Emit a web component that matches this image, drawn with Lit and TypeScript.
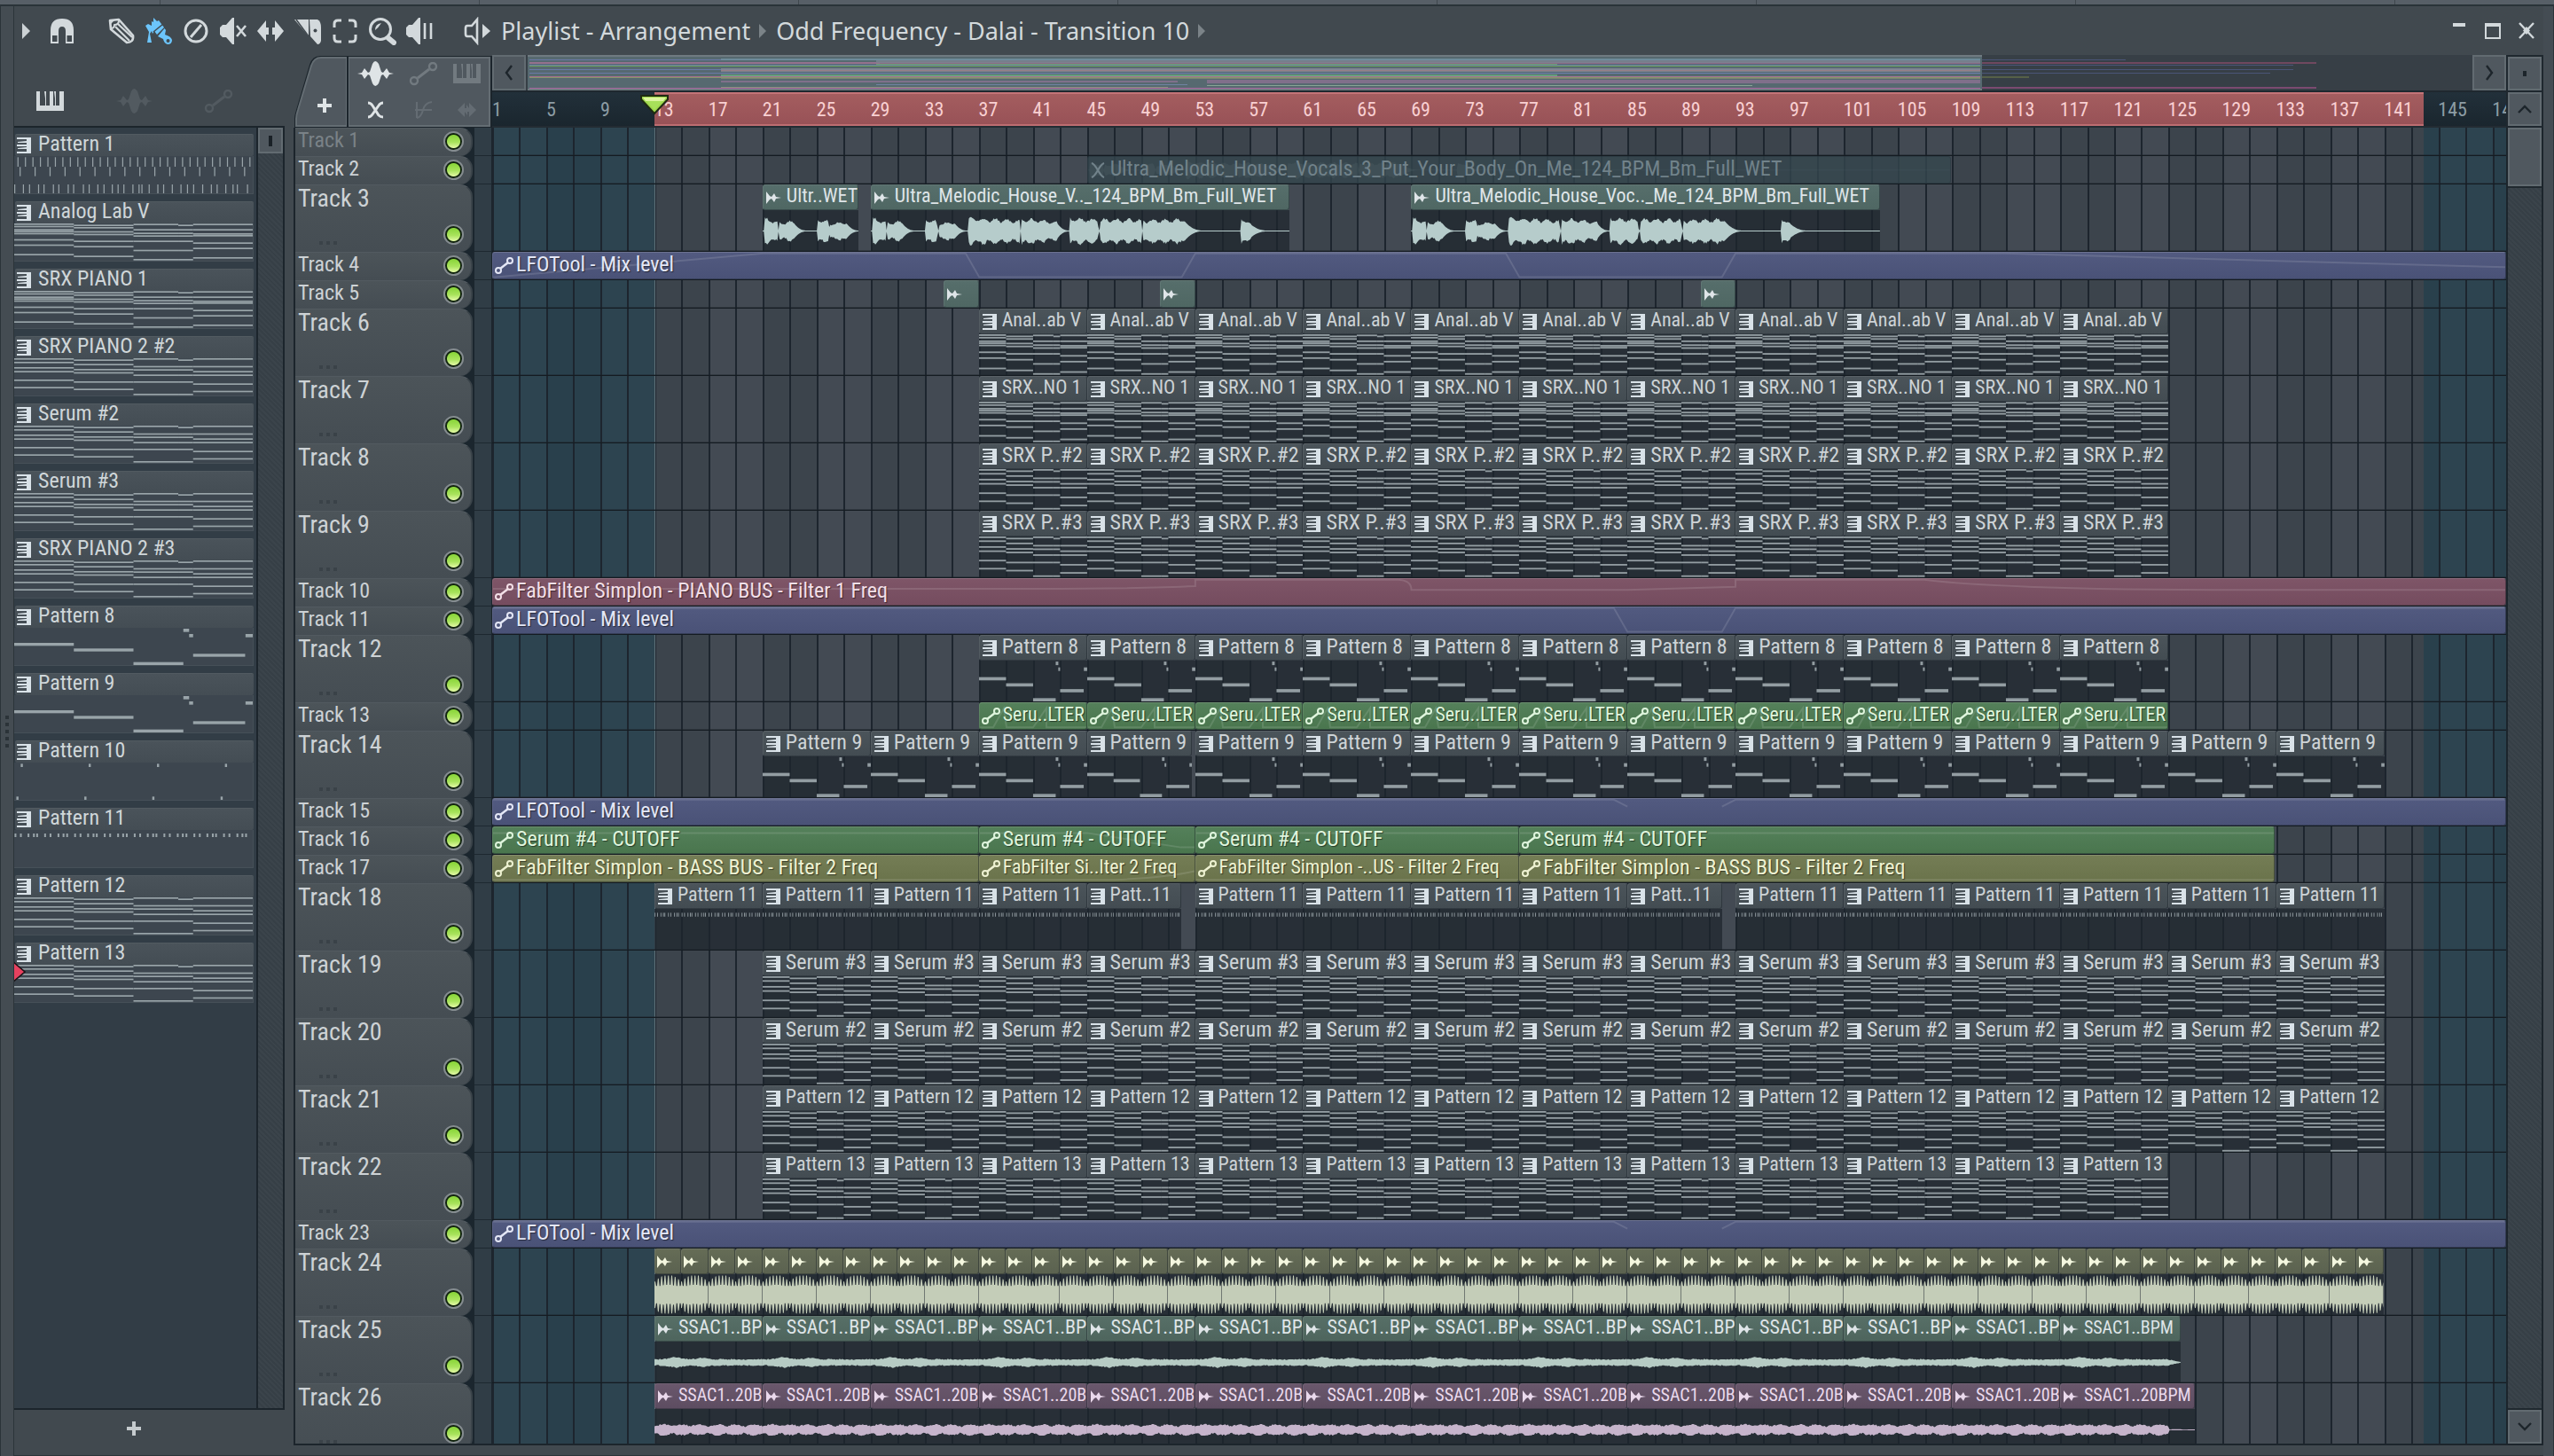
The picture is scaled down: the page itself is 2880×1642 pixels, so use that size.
import { LitElement, html, svg, css, nothing, TemplateResult, SVGTemplateResult } from "lit";
import { customElement, property } from "lit/decorators.js";

/* ---------- timeline model ---------- */

const BARS = 149;
const LOOP_START = 13;
const LOOP_END = 143.9;
const pct = (bars: number) => `${(bars / BARS) * 100}%`;

type Kind = "pattern" | "audio" | "auto";
type Fit = "" | "tight" | "tighter";
interface Clip {
  start: number;
  end: number;
  label: string;
  kind: Kind;
  tone: string;
  art?: string;
  muted?: boolean;
  fit?: Fit;
}
interface Track {
  name: string;
  tall?: boolean;
  off?: boolean;
  clips: Clip[];
}

const run = (
  from: number,
  count: number,
  step: number,
  base: Omit<Clip, "start" | "end">,
  special: Record<number, Partial<Clip>> = {},
): Clip[] =>
  Array.from({ length: count }, (_, i) => {
    const start = from + i * step;
    return { ...base, start, end: start + step, ...(special[start] ?? {}) };
  });

const pattern = (label: string, art: string, fit: Fit = "") => ({ label, art, fit, kind: "pattern" as Kind, tone: "slate" });
const auto = (start: number, end: number, label: string, tone: string, art?: string, fit: Fit = ""): Clip => ({
  start, end, label, tone, art, fit, kind: "auto",
});
const audio = (start: number, end: number, label: string, tone: string, art: string): Clip => ({
  start, end, label, tone, art, fit: "tight", kind: "audio",
});

const END = BARS + 1;
const TRACKS: Track[] = [
  { name: "Track 1", off: true, clips: [] },
  {
    name: "Track 2",
    clips: [{ start: 45, end: 108.9, label: "Ultra_Melodic_House_Vocals_3_Put_Your_Body_On_Me_124_BPM_Bm_Full_WET", kind: "audio", tone: "faded", art: "vocal", muted: true }],
  },
  {
    name: "Track 3",
    tall: true,
    clips: [
      audio(21, 28.1, "Ultr..WET", "teal", "vocal"),
      audio(29, 60, "Ultra_Melodic_House_V.._124_BPM_Bm_Full_WET", "teal", "vocal"),
      audio(69, 103.7, "Ultra_Melodic_House_Voc.._Me_124_BPM_Bm_Full_WET", "teal", "vocal"),
    ],
  },
  { name: "Track 4", clips: [auto(1, END, "LFOTool - Mix level", "blue", "mixA")] },
  {
    name: "Track 5",
    clips: [audio(34.4, 37, "", "teal", "tail"), audio(50.4, 53, "", "teal", "tail"), audio(90.4, 93, "", "teal", "tail")],
  },
  { name: "Track 6", tall: true, clips: run(37, 11, 8, pattern("Anal..ab V", "chordsA", "tight")) },
  { name: "Track 7", tall: true, clips: run(37, 11, 8, pattern("SRX..NO 1", "chordsA", "tight")) },
  { name: "Track 8", tall: true, clips: run(37, 11, 8, pattern("SRX P..#2", "chordsB")) },
  { name: "Track 9", tall: true, clips: run(37, 11, 8, pattern("SRX P..#3", "chordsB")) },
  { name: "Track 10", clips: [auto(1, END, "FabFilter Simplon - PIANO BUS - Filter 1 Freq", "rose", "freq")] },
  { name: "Track 11", clips: [auto(1, END, "LFOTool - Mix level", "blue", "mixB")] },
  { name: "Track 12", tall: true, clips: run(37, 11, 8, pattern("Pattern 8", "bass")) },
  { name: "Track 13", clips: run(37, 11, 8, { label: "Seru..LTER", kind: "auto", tone: "green", art: "ramp", fit: "tight" }) },
  { name: "Track 14", tall: true, clips: run(21, 15, 8, pattern("Pattern 9", "bass"), { 45: { end: 52.8 } }) },
  { name: "Track 15", clips: [auto(1, END, "LFOTool - Mix level", "blue", "mixC")] },
  {
    name: "Track 16",
    clips: [
      auto(1, 37, "Serum #4 - CUTOFF", "green", "flat"),
      auto(37, 53, "Serum #4 - CUTOFF", "green", "fall"),
      auto(53, 77, "Serum #4 - CUTOFF", "green", "flat"),
      auto(77, 132.9, "Serum #4 - CUTOFF", "green", "flat"),
    ],
  },
  {
    name: "Track 17",
    clips: [
      auto(1, 37, "FabFilter Simplon - BASS BUS - Filter 2 Freq", "olive", "low"),
      auto(37, 53, "FabFilter Si..lter 2 Freq", "olive", "rise", "tight"),
      auto(53, 77, "FabFilter Simplon -..US - Filter 2 Freq", "olive", "low", "tight"),
      auto(77, 132.9, "FabFilter Simplon - BASS BUS - Filter 2 Freq", "olive", "low"),
    ],
  },
  {
    name: "Track 18",
    tall: true,
    clips: run(13, 16, 8, pattern("Pattern 11", "ticks", "tight"), {
      45: { end: 52, label: "Patt..11" },
      85: { end: 92, label: "Patt..11" },
    }),
  },
  { name: "Track 19", tall: true, clips: run(21, 15, 8, pattern("Serum #3", "chordsB")) },
  { name: "Track 20", tall: true, clips: run(21, 15, 8, pattern("Serum #2", "chordsB")) },
  { name: "Track 21", tall: true, clips: run(21, 15, 8, pattern("Pattern 12", "chordsB", "tight")) },
  { name: "Track 22", tall: true, clips: run(21, 13, 8, pattern("Pattern 13", "chordsB", "tight")) },
  { name: "Track 23", clips: [auto(1, END, "LFOTool - Mix level", "blue", "mixC")] },
  { name: "Track 24", tall: true, clips: run(13, 64, 2, { label: "", kind: "audio", tone: "sand", art: "kick" }) },
  {
    name: "Track 25",
    tall: true,
    clips: run(13, 14, 8, { label: "SSAC1..BP", kind: "audio", tone: "mint", art: "hat", fit: "tight" }, { 117: { end: 125.95, label: "SSAC1..BPM", fit: "tighter" } }),
  },
  {
    name: "Track 26",
    tall: true,
    clips: run(13, 14, 8, { label: "SSAC1..20B", kind: "audio", tone: "plum", art: "shaker", fit: "tighter" }, { 117: { end: 127, label: "SSAC1..20BPM" } }),
  },
];

const PICKER: [string, string][] = [
  ["Pattern 1", "drums"],
  ["Analog Lab V", "chordsA"],
  ["SRX PIANO 1", "chordsA"],
  ["SRX PIANO 2 #2", "chordsB"],
  ["Serum #2", "chordsB"],
  ["Serum #3", "chordsB"],
  ["SRX PIANO 2 #3", "chordsB"],
  ["Pattern 8", "bass"],
  ["Pattern 9", "bass"],
  ["Pattern 10", "dots"],
  ["Pattern 11", "ticks"],
  ["Pattern 12", "chordsB"],
  ["Pattern 13", "chordsB"],
];

/* ---------- note miniatures, on a 660 x 126 canvas ---------- */

const SEGS = [[0, 165], [165, 330], [330, 454], [454, 495], [495, 660]];
const chords = (rows: number[][]) =>
  rows.flatMap((ys, i) => ys.map((y) => [SEGS[i][0], y - 3, SEGS[i][1] - SEGS[i][0], 5]));

const NOTES: Record<string, number[][]> = {
  chordsA: chords([
    [3, 11, 22, 28, 35, 56, 74, 106],
    [7, 15, 29, 38, 61, 79, 112],
    [4, 22, 34, 43, 61, 92, 123],
    [7, 22, 34, 43, 61, 92, 123],
    [4, 22, 36, 42, 67, 85, 117],
  ]),
  chordsB: chords([
    [3, 15, 33, 46, 75, 100],
    [7, 22, 39, 50, 81, 106],
    [3, 29, 40, 58, 81, 123],
    [7, 29, 40, 58, 81, 123],
    [3, 29, 46, 58, 88, 113],
  ]),
  bass: [
    [0, 51, 165, 10], [165, 70, 165, 10], [330, 116, 138, 10], [495, 88, 144, 10],
    [468, 3, 16, 11], [484, 21, 11, 11], [640, 21, 20, 11],
  ],
  dots: [
    ...[18, 206, 395, 583].map((x) => [x, 4, 6, 11]),
    ...[6, 194, 382, 571].map((x) => [x, 115, 6, 11]),
  ],
  ticks: [0, 1, 2, 3].flatMap((k) =>
    [1, 16, 37, 52, 61, 83, 98, 120, 134, 144].map((x) => [x + k * 165, 12, 5, 12])),
  drums: [
    ...Array.from({ length: 32 }, (_, i) => [9 + i * 20.7, 4, 3, 32]),
    ...Array.from({ length: 16 }, (_, i) => [15 + i * 41.4, 37, 3, 31]),
    ...[0, 24, 41, 66, 81, 107, 122, 148, 163, 190, 206, 230, 247, 270, 286, 302, 327, 344, 352, 372, 396, 412, 436, 460, 478, 495, 520, 544, 560, 584, 604, 616, 644].map((x) => [x, 96, 3, 30]),
  ],
};

const notes = (kind: string) => html`
  <svg class="art" viewBox="0 0 660 126" preserveAspectRatio="none" aria-hidden="true">
    ${NOTES[kind].map(([x, y, w, h]) => svg`<rect x=${x} y=${Math.max(0, y)} width=${w} height=${h} />`)}
  </svg>`;

/* ---------- waveforms ---------- */

const noise = (n: number) => {
  const s = Math.sin(n * 127.1 + 11.7) * 43758.5453;
  return s - Math.floor(s);
};

/* [start, end of sustain, end of decay, peak, level at the end of the sustain] */
const BURSTS: number[][] = [
  [0.1, 1.1, 1.2, 37, 24], [1.2, 2.3, 3.3, 24, 27], [4.05, 4.9, 5, 33, 27], [5, 6.2, 7.15, 22, 26],
  [7.2, 11, 11.05, 36, 30], [11.1, 13.8, 14.7, 37, 25], [14.75, 16.8, 16.9, 36, 32], [16.95, 20, 20.1, 33, 32],
  [20.15, 23.2, 24.6, 30, 34], [27.4, 28.1, 29.4, 38, 22],
];

const envelope = (kind: string, bar: number, i: number, length: number): [number, number] => {
  const r = noise(i);
  const q = noise(i + 500);
  if (kind === "vocal") {
    for (const [a, b, c, peak, last] of BURSTS) {
      if (bar >= a && bar <= b) {
        const amp = peak + ((last - peak) * (bar - a)) / (b - a);
        const ripple = 0.86 + 0.14 * Math.sin(bar * 7);
        return [amp * ripple * (0.82 + 0.18 * r), amp * ripple * (0.82 + 0.22 * q)];
      }
      if (bar > b && bar <= c) {
        const v = last * 0.7 * Math.pow((c - bar) / (c - b), 2.4) + 1;
        return [v, v];
      }
    }
    return [1.2, 1.2];
  }
  if (kind === "kick") {
    const spike = i % 4 < 2 ? 1 : 0.5;
    const shape = 50 * Math.sin(Math.PI * Math.min(1, 0.22 + (bar / length) * 0.56));
    return [Math.max(22, Math.min(48, shape * spike)), Math.max(20, Math.min(46, shape * spike - 4 + 5 * q))];
  }
  const cut = bar > 8 ? Math.max(0.08, kind === "hat" ? 1 - (bar - 8) : 0.1) : 1;
  if (kind === "hat") {
    const swell = 5 * Math.exp(-Math.pow(bar - 1.6, 2) * 3) + 4 * Math.exp(-Math.pow(bar - 3.6, 2) * 4);
    return [(6 + 3 * r + swell) * cut, (6 + 3 * q + swell) * cut];
  }
  const pulse = 5 * Math.abs(Math.sin(bar * 2.36));
  return [(6 + 4 * r + pulse) * cut, (6 + 4 * q + pulse) * cut];
};

const waveCache = new Map<string, string>();
const PER_BAR: Record<string, number> = { vocal: 12, kick: 16, hat: 10, shaker: 10 };
const wavePath = (kind: string, length: number, total: number) => {
  const key = `${kind}:${length}`;
  const hit = waveCache.get(key);
  if (hit) return hit;
  const top: string[] = [];
  const bottom: string[] = [];
  for (let i = 0; i <= total; i++) {
    const [u, d] = envelope(kind, (i / total) * length, i, length);
    top.push(`${i} ${(51 - u).toFixed(1)}`);
    bottom.unshift(`${i} ${(51 + d).toFixed(1)}`);
  }
  const path = `M${top.join("L")}L${bottom.join("L")}Z`;
  waveCache.set(key, path);
  return path;
};

const wave = (kind: string, length: number) => {
  const total = Math.round(length * PER_BAR[kind]);
  return html`
    <svg class="art" viewBox="0 0 ${total} 100" preserveAspectRatio="none" aria-hidden="true">
      <path d=${wavePath(kind, length, total)} />
    </svg>`;
};

/* ---------- automation curves, on a (bars x 100) canvas ---------- */

const CURVES: Record<string, string> = {
  mixA: "M0 96L20 3H35L36 95H51L52 3H75L76 95H91L92 3H112L149 56",
  mixB: "M0 3H83L84 95H91L92 3H149",
  mixC: "M0 3H83L84 30M91 30L92 3H149",
  freq: "M0 38H40Q48 38 52 28V3H67Q68 5 68 42H84L92 30V3H106Q112 42 130 42H149",
  flat: "M0 22H149",
  fall: "M0 22H8L15 78H16",
  low: "M0 94H149",
  rise: "M0 94H10Q14 84 16 60",
  ramp: "M0 94H1L1.8 20L2 94H4L5 20V94H8",
};

const curve = (kind: string, length: number) => html`
  <svg class="curve" viewBox="0 0 ${length} 100" preserveAspectRatio="none" aria-hidden="true">
    <path d=${CURVES[kind]} vector-effect="non-scaling-stroke" />
  </svg>`;

/* ---------- icons ---------- */

const icon = (body: SVGTemplateResult, w = 32, h = 32) =>
  html`<svg class="icon" width=${w} height=${h} viewBox="0 0 ${w} ${h}" aria-hidden="true">${body}</svg>`;

const WAVE_SHAPE = svg`<path fill="currentColor" d="M0 14L5 13L8 8L12 13L14 12L17 3Q20 -3 24 3L27 12L29 13L33 8L36 13L41 14L36 15L33 20L29 15L27 16L24 25Q20 31 17 25L14 16L12 15L8 20L5 15Z" />`;
const LINK_SHAPE = svg`<g fill="none" stroke="currentColor"><circle cx="6" cy="21" r="4" stroke-width="2.4" /><circle cx="27" cy="5" r="4" stroke-width="2.4" /><path d="M10 18L23 8" stroke-width="3" /></g>`;
const KEYS_SHAPE = svg`<path fill="currentColor" d="M0 0H4V16H10V8L9 0H11V16H10H15V0H19V16H21V8L20 0H22V16H26V0H31V22H0Z" />`;

const ICONS = {
  menu: icon(svg`<path d="M0 1L9 10L0 19Z" fill="#ccd2d5" />`, 10, 20),
  crumb: icon(svg`<path d="M0 1L8 9L0 17Z" fill="#7b8388" />`, 9, 18),
  magnet: icon(svg`<path d="M3 30V15Q3 2 16 2T29 15V30H20V16Q20 11 16 11T12 16V30Z" fill="currentColor" /><path d="M5 21H10.500V28H5ZM21.500 21H27V28H21.500Z" fill="#41494f" />`),
  pencil: icon(svg`<g fill="none" stroke="currentColor" stroke-width="2.6" stroke-linejoin="round"><path d="M3 4L13 3L29 21Q30 29 22 29L4 14Z" /><path d="M4 13Q8 13 8 9Q13 9 13 4" stroke-width="2" /><path d="M9 11L25 27M12 8L28 23" stroke-width="2.200" /></g><path d="M3 3L9 3L3 9Z" fill="currentColor" />`),
  brush: icon(svg`<path fill="currentColor" d="M1 10L4 8L8 10L8 5L10 6L10 1L14 5L16 4L22 12L14 20L11 16L9 19L8 16L6 19L8 29H3L5 17Z" /><path d="M10 17L21 8" stroke="#41494f" stroke-width="1.500" /><path fill="currentColor" d="M22.500 13L24 15L23 20Q30 22 31 26Q31 31 26 31Q22 30 21 25L17 23L15 22Z" /><circle cx="26.500" cy="27" r="2" fill="#41494f" />`),
  forbid: icon(svg`<g fill="none" stroke="currentColor" stroke-width="3"><circle cx="16" cy="16" r="12" /><path d="M10 23L22 9" /></g>`),
  mute: icon(svg`<path fill="currentColor" d="M1 12L4 9H8L15 1H17V31H15L8 23H4L1 20Z" /><path d="M20 10L30 22M30 10L20 22" stroke="currentColor" stroke-width="2.600" />`),
  slip: icon(svg`<path fill="currentColor" d="M1 16L11 4V12H14V20H11V28ZM31 16L21 4V12H18V20H21V28Z" />`),
  slice: icon(svg`<path fill="currentColor" d="M1 3H17V22Z" /><path d="M3 3L17 22" stroke="#41494f" stroke-width="1.500" /><path fill="currentColor" d="M18 3H27Q31 5 31 12V27Q30 31 27 31L19 22Z" /><circle cx="24.500" cy="15.500" r="2" fill="#41494f" />`),
  select: icon(svg`<path fill="none" stroke="currentColor" stroke-width="3" d="M4 12V8Q4 4 8 4H12M20 4H24Q28 4 28 8V12M28 20V24Q28 28 24 28H20M12 28H8Q4 28 4 24V20" />`),
  zoom: icon(svg`<circle cx="14" cy="14" r="11.500" fill="none" stroke="currentColor" stroke-width="3" /><path d="M23 24L29 29" stroke="currentColor" stroke-width="6" stroke-linecap="round" /><path d="M8 15Q8 8 15 7Q12 12 8 15Z" fill="currentColor" />`),
  listen: icon(svg`<path fill="currentColor" d="M1 12L4 9H8L15 1H17V31H15L8 23H4L1 20Z" /><path d="M22 7V25M29 7V25" stroke="currentColor" stroke-width="2.600" />`),
  speaker: icon(svg`<path fill="none" stroke="currentColor" stroke-width="2.600" d="M9 10H4Q2 10 2 13V19Q2 22 4 22H9L15 29V3Z" /><path fill="currentColor" d="M21 8L30 16L21 24Z" />`),
  wave: icon(WAVE_SHAPE, 41, 28),
  link: icon(LINK_SHAPE, 33, 27),
  keys: icon(KEYS_SHAPE, 31, 22),
  cross: icon(svg`<path fill="none" stroke="currentColor" stroke-width="3" d="M1 2Q4 2 6 5L13 16Q15 18 18 18M18 2Q15 2 13 5L6 15Q4 18 1 18" />`, 19, 20),
  curve: icon(svg`<path fill="none" stroke="currentColor" stroke-width="2" d="M3 1V19M1 10H20M3 19Q8 18 10 10Q12 2 20 1" />`, 21, 20),
  stretch: icon(svg`<path fill="currentColor" d="M0 10L8 2V8H10V4L13 8V2L21 10L13 18V12H11V16L8 12V18Z" />`, 21, 20),
  plus: icon(svg`<path fill="currentColor" d="M6 0H10V6H16V10H10V16H6V10H0V6H6Z" />`, 16, 16),
  left: icon(svg`<path fill="none" stroke="#1d252b" stroke-width="2.400" d="M8 1L2 9L8 17" />`, 10, 18),
  right: icon(svg`<path fill="none" stroke="#1d252b" stroke-width="2.400" d="M2 1L8 9L2 17" />`, 10, 18),
  up: icon(svg`<path fill="none" stroke="#1d252b" stroke-width="2.400" d="M1 9L8 2L15 9" />`, 16, 10),
  down: icon(svg`<path fill="none" stroke="#1d252b" stroke-width="2.400" d="M1 1L8 8L15 1" />`, 16, 10),
  min: icon(svg`<path d="M0 0H14V4H0Z" fill="currentColor" />`, 14, 18),
  max: icon(svg`<path d="M1 1H17V17H1Z" fill="none" stroke="currentColor" stroke-width="2" /><path d="M0 0H18V4H0Z" fill="currentColor" />`, 18, 18),
  close: icon(svg`<path d="M1 1L17 18M17 1L1 18" stroke="currentColor" stroke-width="2.400" /><path d="M9 5L13 9.500L9 14L5 9.500Z" fill="currentColor" />`, 18, 19),
};

const CLIP_ICONS = {
  pattern: icon(svg`<path fill="#d9e2e8" d="M0 0H16V18H0V16H11V13H1V12L11 11V10H0V8H11V6H1V5L11 4V2H0Z" />`, 16, 18),
  audio: icon(svg`<path fill="currentColor" d="M0 2L4 7L6 8L9 4L11 8L17 9L11 10L9 14L6 10L4 11L0 16Z" />`, 17, 18),
  auto: icon(svg`<g fill="none" stroke="currentColor" stroke-width="2"><circle cx="4" cy="15" r="3" /><circle cx="17" cy="4" r="3" /><path d="M6 13L15 6" stroke-width="2.400" /></g>`, 21, 19),
  muted: icon(svg`<path fill="none" stroke="currentColor" stroke-width="2.200" d="M1 1Q4 2 8 9T15 17M15 1Q12 2 8 9T1 17" />`, 16, 18),
};

/* ---------- elements ---------- */

const base = css`
  :host { display: block; box-sizing: border-box; }
  *, *::before, *::after { box-sizing: border-box; }
  .icon { display: block; flex: none; }
  button {
    appearance: none; border: 0; margin: 0; padding: 0; background: none;
    color: inherit; font: inherit; display: grid; place-items: center;
  }
`;

@customElement("fl-clip")
export class FlClip extends LitElement {
  @property({ attribute: false }) clip!: Clip;
  @property({ type: Boolean }) tall = false;

  static styles = [base, css`
    :host { height: 100%; min-width: 0; }
    .clip { height: 100%; display: flex; flex-direction: column; position: relative; }
    .head {
      flex: 1; min-height: 0; display: flex; align-items: center; gap: 6px;
      padding-left: 3px; border-radius: 3px; overflow: hidden; white-space: nowrap;
      border: 1px solid #10181e66; border-top-color: #ffffff1f; border-left-color: #ffffff12;
      font-size: 24px; line-height: 26px; color: #dfe5e8; position: relative;
    }
    .tight .head { font-size: 22px; }
    .tighter .head { font-size: 20px; }
    .tall .head { flex: 0 0 29px; }
    .body { flex: 1; min-height: 0; background: #1e262dbb; }
    .art { display: block; width: 100%; height: 100%; fill: var(--ink); }
    .curve { position: absolute; left: 0; top: 0; width: 100%; height: 100%; fill: none; stroke: #ffffff1f; stroke-width: 2; }
    .label, .icon { position: relative; }
    .label { padding-bottom: 3px; }
    .slate .head { background: linear-gradient(#4b545a, #434c52); color: #cdd3d6; }
    .slate { --ink: #939da2; }
    .teal .head { background: linear-gradient(#566e6b, #4f6763); }
    .teal { --ink: #b6cccb; }
    .sand .head { background: linear-gradient(#656c56, #5b6250); color: #f4f7df; padding-left: 2px; }
    .sand { --ink: #c4cdb8; }
    .mint .head { background: linear-gradient(#576f67, #4e655d); }
    .mint { --ink: #b6cbc4; }
    .plum .head { background: linear-gradient(#6a576c, #5d4d61); color: #ead9ec; }
    .plum { --ink: #c6b4cb; }
    .faded .head { background: #34464ecc; color: #71828a; border-color: #22303766; }
    .ghost { position: absolute; left: 0; top: 0; width: 100%; height: 100%; --ink: #5f737a33; }
    .auto .head { gap: 5px; padding-left: 2px; border-top-color: #ffffff30; text-shadow: 1px 1px 1px #00000080; }
    .auto .icon { margin-right: -2px; }
    .blue .head { background: linear-gradient(#525a80, #4a5277); color: #e4e7f6; }
    .rose .head { background: linear-gradient(#7e5567, #754c5f); color: #f3dfe7; }
    .green .head { background: linear-gradient(#54805a, #4a764e); color: #dff5dd; }
    .olive .head { background: linear-gradient(#747d55, #6a734b); color: #eef2d2; }
  `];

  render() {
    const c = this.clip;
    const length = c.end - c.start;
    return html`
      <div class="clip ${c.kind} ${c.tone} ${this.tall ? "tall" : ""} ${c.fit ?? ""}">
        <div class="head">
          ${c.kind === "auto" && c.art ? curve(c.art, length) : nothing}
          ${c.muted ? html`<div class="ghost">${wave(c.art!, length)}</div>` : nothing}
          ${c.muted ? CLIP_ICONS.muted : CLIP_ICONS[c.kind]}
          ${c.label ? html`<span class="label">${c.label}</span>` : nothing}
        </div>
        ${this.tall ? html`<div class="body">${c.kind === "audio" ? wave(c.art!, length) : notes(c.art!)}</div>` : nothing}
      </div>`;
  }
}

@customElement("fl-track")
export class FlTrack extends LitElement {
  @property({ attribute: false }) track!: Track;

  static styles = [base, css`
    .row { display: flex; height: 32px; }
    .row.tall { height: 76px; }
    .name {
      flex: 0 0 202px; background: #1b262e; padding-right: 2px; display: flex;
    }
    .plate {
      flex: 1; display: flex; justify-content: space-between; padding: 0 8px 0 3px;
      background: linear-gradient(#4c5459, #454d53);
      border-radius: 0 14px 14px 0; border-right: 2px solid #3a4349; border-top: 1px solid #525a60;
      font-size: 24px; line-height: 26px; color: #cdd2d5;
    }
    .tall .plate { font-size: 28px; line-height: 30px; }
    .off .text { color: #7a8287; }
    .side { display: flex; flex-direction: column; }
    .dots { display: flex; gap: 4px; padding: 33px 0 0 24px; }
    .dot { width: 4px; height: 4px; background: #3a4248; }
    .led {
      appearance: none; align-self: flex-end; margin: 0 0 5px; width: 23px; height: 23px; border-radius: 50%;
      border: 2px solid #858c90;
      background: radial-gradient(circle at 50% 50%, transparent 7px, #12240f 8px), linear-gradient(#8ad63a 15%, #a9e35d 55%, #e6fba8 90%);
    }
    .tall .led { margin-bottom: 8px; }
    .pad { flex: 0 0 20px; background: #303d46; border-right: 1px solid #1b252d; border-bottom: 1px solid #1d2830; }
    .lane { flex: 1; min-width: 0; display: flex; border-bottom: 1px solid #141b21; box-shadow: inset 0 -1px 0 #1c242b66; overflow: hidden; }
    .slot { flex: none; min-width: 0; }
  `];

  render() {
    const t = this.track;
    let at = 1;
    return html`
      <div class="row ${t.tall ? "tall" : ""} ${t.off ? "off" : ""}">
        <div class="name">
          <div class="plate">
            <div class="side">
              <span class="text">${t.name}</span>
              ${t.tall ? html`<div class="dots"><i class="dot"></i><i class="dot"></i><i class="dot"></i></div>` : nothing}
            </div>
            <input class="led" type="checkbox" checked aria-label="${t.name} enabled" />
          </div>
        </div>
        <div class="pad"></div>
        <div class="lane">
          ${t.clips.map((c) => {
            const gap = c.start - at;
            at = c.end;
            return html`<fl-clip class="slot" .clip=${c} ?tall=${!!t.tall}
              style="width:${pct(c.end - c.start)};margin-left:${pct(gap)}"></fl-clip>`;
          })}
        </div>
      </div>`;
  }
}

const TOOLS: [string, TemplateResult, string][] = [
  ["Draw", ICONS.pencil, ""],
  ["Paint", ICONS.brush, "active"],
  ["Delete", ICONS.forbid, ""],
  ["Mute", ICONS.mute, ""],
  ["Slip", ICONS.slip, ""],
  ["Slice", ICONS.slice, ""],
  ["Select", ICONS.select, ""],
  ["Zoom", ICONS.zoom, ""],
  ["Playback", ICONS.listen, ""],
];

/* overview strips that run past the visible range: [top, width %, colour, thickness] */
const STRIPS: [number, number, string, number][] = [
  [5, 82, "#4a5578", 1], [8, 91.800, "#70485f", 2], [11, 90.600, "#4a5578", 1],
  [16, 90.600, "#4a5578", 1], [20, 89.400, "#4a5578", 1], [24, 77, "#566048", 2], [36, 91.800, "#7b4a70", 2],
];
/* blocks inside the visible range: [left %, top, width %, height, colour] */
const BLOCKS: [number, number, number, number, string][] = [
  [10, 4, 64.700, 2, "#6f8f9c"], [0.2, 8, 18, 2, "#96728f"], [18, 6, 56.700, 3, "#7b8391"],
  [18, 10, 35, 1, "#6fae6c"], [0.2, 12, 74.500, 1, "#6fae55"], [10, 15, 64.700, 4, "#848894"], [10, 17, 64.700, 1, "#9b7f85"],
  [10, 20, 64.700, 1, "#6e83b0"], [10, 22, 43, 2, "#68a880"], [10, 24, 64.700, 1, "#a87396"], [10, 26, 64.700, 1, "#7f8a72"],
  [10, 29, 23.500, 2, "#87728f"], [35, 28, 39.700, 4, "#87728f"], [18, 33, 16, 1, "#7488aa"], [35, 34, 28, 1, "#8fb09a"], [10, 36, 23, 1, "#8f9a7e"],
];

@customElement("app-root")
export class AppRoot extends LitElement {
  static styles = [base, css`
    :host {
      height: 100vh; overflow: hidden; color: #d3d9dc;
      font-family: "Roboto Condensed", "Liberation Sans Narrow", "Open Sans Condensed", Roboto, sans-serif;
    }
    .window { height: 100%; display: flex; flex-direction: column; background: #41494f; }
    .strip { flex: 0 0 7px; background: #575f67; border-bottom: 2px solid #2a3339; display: flex; justify-content: space-around; }
    .strip i { width: 1px; background: #3f474d; }
    .frame { flex: 1; min-height: 0; display: flex; }
    .rail { flex: 0 0 16px; background: #444c52; border-left: 1px solid #2b3439; border-right: 1px solid #2b3439; display: grid; place-content: center; gap: 4px; }
    .rail i { width: 4px; height: 4px; background: #2b3338; }
    .edge { flex: 0 0 12px; border-right: 1px solid #2a3238; background: #444c53; }
    .content { flex: 1; min-width: 0; display: flex; flex-direction: column; border-bottom: 1px solid #2b3439; }

    .toolbar { flex: 0 0 55px; display: flex; align-items: center; padding: 0 0 0 3px; }
    .toolbar button { width: 42px; height: 44px; }
    .toolbar .narrow { width: 22px; }
    .toolbar .magnet { margin-right: 25px; margin-left: 8px; }
    .toolbar .active { color: #6cc5fb; }
    .toolbar .speaker { margin-left: 24px; }
    .title { font: 27px/32px "Noto Sans", "Open Sans", sans-serif; margin: 0 0 0 5px; display: flex; align-items: center; gap: 10px; font-weight: 400; white-space: nowrap; }
    .sys { margin-left: auto; display: flex; }
    .toolbar .sys button { width: 38px; }

    .main { flex: 1; min-height: 0; display: flex; gap: 10px; }

    .picker { flex: 0 0 305px; display: flex; flex-direction: column; }
    .modes { flex: 0 0 80px; display: flex; gap: 55px; padding: 24px 0 0 20px; align-items: center; }
    .modes button { width: 40px; height: 40px; }
    .modes .dim { color: #525a60; }
    .pickbody { flex: 1; min-height: 0; display: flex; border: 2px solid #1c252c; border-left: 0; background: #323d46; }
    .items { flex: 1; min-width: 0; list-style: none; margin: 0; padding: 7px 3px 0 0; display: flex; flex-direction: column; gap: 8px; overflow: hidden; }
    .item { height: 68px; flex: none; position: relative; }
    .ihead { height: 25px; margin-left: 1px; display: flex; align-items: center; gap: 8px; padding-left: 2px; background: linear-gradient(#4a535a, #444d54); border-top: 1px solid #525b61; border-radius: 2px; font-size: 24px; line-height: 22px; color: #cfd6d9; }
    .iname { padding-bottom: 4px; }
    .ibody { height: 43px; background: #3d464f; border: solid #465058; border-width: 0 1px 1px 0; }
    .ibody .art { display: block; width: 100%; height: 100%; fill: #99a4a9; }
    .flag { position: absolute; left: 0; top: 21px; }
    .pscroll { flex: 0 0 30px; border-left: 2px solid #1c252c; }
    .addrow { flex: 0 0 51px; display: grid; place-content: start center; padding: 13px 36px 0 0; color: #c5cbce; }

    .hatch { background: repeating-linear-gradient(45deg, #363f46 0 2px, #3b444b 2px 4px); }
    .thumb, .square { background: #50585f; border: 2px solid #626b71; }
    .pthumb { height: 29px; width: 100%; }
    .pthumb i { width: 4px; height: 12px; background: #1a2127; }

    .playlist { flex: 1; min-width: 0; display: flex; flex-direction: column; }
    .upper { flex: 0 0 82px; height: 82px; display: flex; }
    .tab { flex: 0 0 224px; position: relative; display: flex; }
    .tabshape { position: absolute; left: 0; top: 0; }
    .tab button { position: relative; color: #dfe4e6; }
    .add { width: 62px; padding: 32px 0 0 8px; }
    .filters { display: grid; grid-template-columns: 60px 48px 50px; grid-template-rows: 42px 40px; }
    .filters .dim { color: #727a80; }
    .filters .dimmer { color: #646c73; }
    .heads { flex: 1; min-width: 0; display: flex; flex-direction: column; }
    .overview { flex: 0 0 42px; height: 42px; display: flex; border-bottom: 2px solid #1f282f; }
    .square { width: 38px; }
    .map { flex: 1; min-width: 0; height: 40px; background: #373f46; overflow: hidden; }
    .map svg { display: block; width: 100%; height: 100%; }
    .ruler { flex: 1; min-height: 0; display: flex; position: relative; overflow: hidden; background: linear-gradient(#22303a, #1a262e); border-bottom: 2px solid #232c33; }
    .loop { position: absolute; top: 0; bottom: 0; background: linear-gradient(#a45d5f, #985257); border-top: 2px solid #c47478; border-bottom: 2px solid #bd6d71; }
    .mark { flex: none; position: relative; font-size: 22px; line-height: 40px; color: #8d9da5; white-space: nowrap; }
    .mark.in { color: #f9d0d2; }
    .head-pin { position: absolute; top: 2px; margin-left: -17px; }

    .corner { flex: 0 0 42px; display: flex; flex-direction: column; background: #1f282f; padding: 2px 2px 0; gap: 2px; }
    .corner .square { height: 38px; }
    .corner .square i { width: 4px; height: 6px; background: #1d252b; }

    .lower { flex: 1; min-height: 0; display: flex; border-bottom: 2px solid #1c252c; margin-bottom: 11px; }
    .arrange { flex: 1; min-width: 0; position: relative; overflow: hidden; border-left: 2px solid #1c252c; }
    .canvas { position: absolute; left: 222px; right: 0; top: 0; bottom: 0; }
    .canvas svg { display: block; width: 100%; height: 100%; }
    .tracks { position: relative; }
    .cursor { position: absolute; top: 0; bottom: 0; width: 1px; background: #73878fcc; }
    .vscroll { flex: 0 0 42px; border: solid #1c252c; border-width: 0 2px; display: flex; flex-direction: column; }
    .vscroll .thumb { height: 66px; }
    .vscroll .track { flex: 1; border-top: 2px solid #20292f; border-bottom: 2px solid #20292f; }
    .vscroll .square { height: 38px; }
  `];

  private grid() {
    const p = (bar: number) => `${((bar - 1) / BARS) * 100}%`;
    const stripes = Array.from({ length: 38 }, (_, i) => i).filter((i) => i % 2 === 0);
    const lines = Array.from({ length: 75 }, (_, i) => 1 + i * 2);
    return html`
      <svg shape-rendering="crispEdges" aria-hidden="true">
        <rect width="100%" height="100%" fill="#3c444c" />
        ${stripes.map((i) => svg`<rect x=${p(1 + i * 4)} width=${pct(4)} height="100%" fill="#434a53" />`)}
        <rect width=${pct(LOOP_START - 1)} height="100%" fill="#103c4c" fill-opacity=".42" />
        <rect x=${p(LOOP_END)} width="10%" height="100%" fill="#103c4c" fill-opacity=".42" />
        ${lines.map((b) => svg`<rect x=${p(b)} width="2" height="100%" fill="#1d252e" />`)}
      </svg>`;
  }

  private overview() {
    return html`
      <svg viewBox="0 0 100 40" preserveAspectRatio="none" shape-rendering="crispEdges" aria-hidden="true">
        ${STRIPS.map(([y, w, c, h]) => svg`<rect x="0.2" y=${y} width=${w} height=${h} fill=${c} />`)}
        <rect x="0.1" y="1" width="74.700" height="37" fill="#566970" />
        <g>
          <rect x="0.2" y="5" width="74.500" height="1" fill="#6a7aa8" /><rect x="0.2" y="8" width="74.500" height="2" fill="#8a6a88" />
          <rect x="0.2" y="11" width="74.500" height="1" fill="#6a7aa8" /><rect x="0.2" y="16" width="74.500" height="1" fill="#6a7aa8" />
          <rect x="0.2" y="20" width="74.500" height="1" fill="#6a7aa8" /><rect x="0.2" y="24" width="74.500" height="1" fill="#a8708f" />
          <rect x="0.2" y="25" width="74.500" height="1" fill="#84956a" /><rect x="0.2" y="37" width="74.500" height="1" fill="#a866a0" />
        </g>
        ${BLOCKS.map(([x, y, w, h, c]) => svg`<rect x=${x} y=${y} width=${w} height=${h} fill=${c} fill-opacity=".85" />`)}
        <rect x="0.1" y="0" width="74.700" height="2" fill="#6f7a80" />
        <rect x="0.1" y="38" width="74.700" height="2" fill="#6f7a80" />
      </svg>`;
  }

  render() {
    const marks = Array.from({ length: 38 }, (_, i) => 1 + i * 4);
    return html`
      <div class="window">
        <div class="strip" aria-hidden="true">${Array.from({ length: 8 }, () => html`<i></i>`)}</div>
        <div class="frame">
          <div class="rail" aria-hidden="true"><i></i><i></i><i></i><i></i><i></i></div>
          <div class="content">
            <header class="toolbar">
              <button class="narrow" aria-label="Menu">${ICONS.menu}</button>
              <button class="magnet" aria-label="Snap">${ICONS.magnet}</button>
              ${TOOLS.map(([name, glyph, cls]) => html`<button class=${cls} aria-label=${name}>${glyph}</button>`)}
              <button class="speaker" aria-label="Preview">${ICONS.speaker}</button>
              <h1 class="title"><span>Playlist - Arrangement</span>${ICONS.crumb}<span>Odd Frequency - Dalai - Transition 10</span>${ICONS.crumb}</h1>
              <div class="sys">
                <button aria-label="Minimize">${ICONS.min}</button>
                <button aria-label="Maximize">${ICONS.max}</button>
                <button aria-label="Close">${ICONS.close}</button>
              </div>
            </header>
            <div class="main">
              <aside class="picker">
                <div class="modes">
                  <button aria-label="Patterns">${ICONS.keys}</button>
                  <button class="dim" aria-label="Audio">${ICONS.wave}</button>
                  <button class="dim" aria-label="Automation">${ICONS.link}</button>
                </div>
                <div class="pickbody">
                  <ul class="items">
                    ${PICKER.map(([name, art], i) => html`
                      <li class="item">
                        <div class="ihead">${CLIP_ICONS.pattern}<span class="iname">${name}</span></div>
                        <div class="ibody">${notes(art)}</div>
                        ${i === PICKER.length - 1
                          ? html`<svg class="flag" width="13" height="24" viewBox="0 0 13 24" aria-hidden="true"><path d="M-1 1L12 12L-1 23Z" fill="#e8415f" stroke="#1b1417" stroke-width="1.500" /></svg>`
                          : nothing}
                      </li>`)}
                  </ul>
                  <div class="pscroll hatch"><button class="thumb pthumb" aria-label="Scroll patterns"><i></i></button></div>
                </div>
                <div class="addrow"><button aria-label="Add pattern">${ICONS.plus}</button></div>
              </aside>

              <section class="playlist">
                <div class="upper">
                  <div class="tab">
                    <svg class="tabshape" width="224" height="82" viewBox="0 0 224 82" aria-hidden="true">
                      <path d="M1 82V72Q1 68 3 62L18 11Q21 1 30 1H224V82Z" fill="#1c252c" />
                      <path d="M3 80V72Q3 68 5 62L20 12Q23 3 31 3H60V80ZM62 3H221V80H62Z" fill="#50585f" stroke="#646d73" stroke-width="2" />
                      <path d="M61 1V82" stroke="#1c252c" stroke-width="2" />
                    </svg>
                    <button class="add" aria-label="Add track">${ICONS.plus}</button>
                    <div class="filters">
                      <button aria-label="Audio clips">${ICONS.wave}</button>
                      <button class="dim" aria-label="Automation clips">${ICONS.link}</button>
                      <button class="dim" aria-label="Pattern clips">${ICONS.keys}</button>
                      <button aria-label="Crossfade">${ICONS.cross}</button>
                      <button class="dimmer" aria-label="Envelope">${ICONS.curve}</button>
                      <button class="dimmer" aria-label="Stretch">${ICONS.stretch}</button>
                    </div>
                  </div>
                  <div class="heads">
                    <div class="overview">
                      <button class="square" aria-label="Scroll left">${ICONS.left}</button>
                      <div class="map">${this.overview()}</div>
                      <button class="square" aria-label="Scroll right">${ICONS.right}</button>
                    </div>
                    <div class="ruler">
                      <div class="loop" style="left:${pct(LOOP_START - 1)};width:${pct(LOOP_END - LOOP_START)}"></div>
                      ${marks.map((b) => html`<span class="mark ${b >= LOOP_START && b < LOOP_END ? "in" : ""}" style="width:${pct(4)}">${b}</span>`)}
                      <svg class="head-pin" style="left:${pct(LOOP_START - 1)}" width="34" height="24" viewBox="0 0 34 24" aria-hidden="true">
                        <path d="M2 2H32V6L17 22L2 6Z" fill="#9fd84c" stroke="#1f2b12" stroke-width="2" />
                        <path d="M4 4H30L27 8H7Z" fill="#dcf5a0" /><path d="M8 8H26L17 18Z" fill="#a8e05a" />
                      </svg>
                    </div>
                  </div>
                  <div class="corner">
                    <button class="square" aria-label="Fit"><i></i></button>
                    <button class="square" aria-label="Scroll up">${ICONS.up}</button>
                  </div>
                </div>
                <div class="lower">
                  <div class="arrange">
                    <div class="canvas">${this.grid()}<div class="cursor" style="left:${pct(LOOP_START - 1)}"></div></div>
                    <div class="tracks">${TRACKS.map((t) => html`<fl-track .track=${t}></fl-track>`)}</div>
                  </div>
                  <div class="vscroll">
                    <div class="thumb"></div>
                    <div class="track hatch"></div>
                    <button class="square" aria-label="Scroll down">${ICONS.down}</button>
                  </div>
                </div>
              </section>
            </div>
          </div>
          <div class="edge"></div>
        </div>
      </div>`;
  }
}
